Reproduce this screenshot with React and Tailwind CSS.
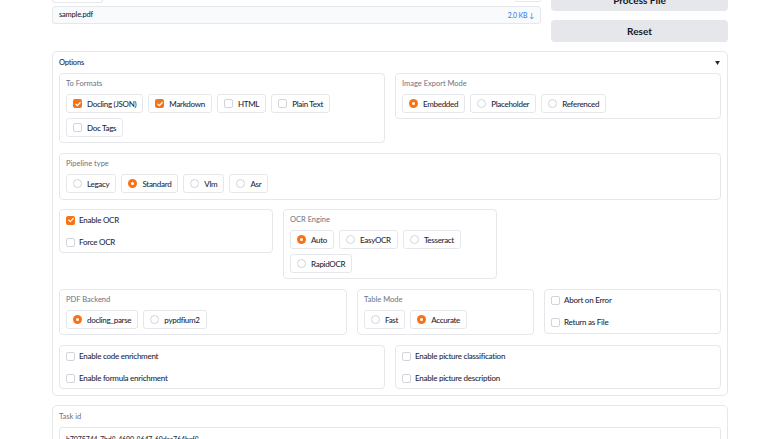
import React from 'react'

const font = { fontFamily: 'Lato, "Open Sans", sans-serif' }

function Tick({ on }) {
  if (!on) return <span className="w-[9px] h-[9px] rounded-[2px] border border-[#d1d5db] bg-white shrink-0" />
  return (
    <span className="w-[9px] h-[9px] rounded-[2px] bg-[#f97316] flex items-center justify-center shrink-0">
      <svg viewBox="0 0 10 10" className="w-[8px] h-[8px]">
        <path d="M2.3 5.3l1.9 1.8 3.6-4" stroke="white" strokeWidth="1.5" fill="none" strokeLinecap="round" strokeLinejoin="round" />
      </svg>
    </span>
  )
}

function Dot({ on }) {
  if (!on) return <span className="w-[9px] h-[9px] rounded-full border border-[#d1d5db] bg-white shrink-0" />
  return (
    <span className="w-[9px] h-[9px] rounded-full bg-[#f97316] flex items-center justify-center shrink-0">
      <span className="w-[3px] h-[3px] rounded-full bg-white" />
    </span>
  )
}

function Chip({ label, on, radio }) {
  return (
    <div className="h-[19px] flex items-center gap-[5px] px-[6px] border border-[#e5e7eb] rounded-[3px] bg-white">
      {radio ? <Dot on={on} /> : <Tick on={on} />}
      <span className="text-[8px] font-medium tracking-[-0.3px] text-[#1f2937] leading-none">{label}</span>
    </div>
  )
}

function Group({ title, children, className = '' }) {
  return (
    <div className={`border border-[#e5e7eb] rounded-[4px] px-[6px] pt-[3px] pb-[5px] ${className}`}>
      <div className="h-[14px] flex items-center text-[7.5px] text-[#6b7280]">{title}</div>
      <div className="mt-[3px] flex flex-wrap gap-[5px]">{children}</div>
    </div>
  )
}

function Toggles({ items, className = '' }) {
  return (
    <div className={`border border-[#e5e7eb] rounded-[4px] px-[6px] pt-[3px] pb-[3px] flex flex-col gap-[8px] ${className}`}>
      {items.map(([label, on]) => (
        <div key={label} className="h-[14px] flex items-center gap-[4px]">
          <Tick on={on} />
          <span className="text-[8px] font-medium tracking-[-0.25px] text-[#1f2937]">{label}</span>
        </div>
      ))}
    </div>
  )
}

export default function App() {
  return (
    <div className="bg-white min-h-screen px-[52px]" style={font}>
      {/* file + actions */}
      <div className="flex items-start gap-[10px]">
        <div className="flex-1">
          <div className="flex justify-between">
            <div className="w-[51px] h-[3px] border border-t-0 border-[#e5e7eb] rounded-b-[3px]" />
            <div className="w-[26px] h-[2px] border border-t-0 border-[#e5e7eb] rounded-b-[3px]" />
          </div>
          <div className="mt-[3px] h-[18px] border border-[#e5e7eb] rounded-[3px] bg-[#f9fafb] flex items-center justify-between px-[6px]">
            <span className="text-[7.5px] font-medium tracking-[-0.2px] text-[#1f2937]">sample.pdf</span>
            <span className="text-[7px] font-medium tracking-[-0.2px] text-[#3b82f6]">2.0 KB ↓</span>
          </div>
        </div>
        <div className="w-[177px] flex flex-col">
          <button className="-mt-[11px] h-[22px] rounded-[4px] bg-[#e5e7eb] text-[10px] font-bold text-[#111827]">Process File</button>
          <button className="mt-[9px] h-[22px] rounded-[4px] bg-[#e5e7eb] text-[10px] font-bold text-[#111827]">Reset</button>
        </div>
      </div>

      {/* options */}
      <div className="mt-[9px] border border-[#e5e7eb] rounded-[5px] px-[6px] pb-[6px]">
        <div className="h-[21px] flex items-center justify-between">
          <span className="text-[7.5px] font-medium tracking-[-0.2px] text-[#1f2937]">Options</span>
          <svg viewBox="0 0 6 5" className="w-[5px] h-[4px] mr-[1px]"><path d="M0 0h6L3 5z" fill="#1f2937" /></svg>
        </div>
        <div className="flex flex-col gap-[10px]">
          <div className="grid grid-cols-2 items-start gap-[10px]">
            <Group title="To Formats">
              <Chip label="Docling (JSON)" on />
              <Chip label="Markdown" on />
              <Chip label="HTML" />
              <Chip label="Plain Text" />
              <Chip label="Doc Tags" />
            </Group>
            <Group title="Image Export Mode">
              <Chip radio label="Embedded" on />
              <Chip radio label="Placeholder" />
              <Chip radio label="Referenced" />
            </Group>
          </div>

          <Group title="Pipeline type" className="pb-[6px]">
            <Chip radio label="Legacy" />
            <Chip radio label="Standard" on />
            <Chip radio label="Vlm" />
            <Chip radio label="Asr" />
          </Group>

          <div className="grid grid-cols-3 items-start gap-[10px] -mt-[1px]">
            <Toggles items={[['Enable OCR', true], ['Force OCR', false]]} />
            <Group title="OCR Engine">
              <Chip radio label="Auto" on />
              <Chip radio label="EasyOCR" />
              <Chip radio label="Tesseract" />
              <Chip radio label="RapidOCR" />
            </Group>
          </div>

          <div className="flex items-start gap-[10px]">
            <Group title="PDF Backend" className="w-[288px]">
              <Chip radio label="docling_parse" on />
              <Chip radio label="pypdfium2" />
            </Group>
            <Group title="Table Mode" className="flex-1">
              <Chip radio label="Fast" />
              <Chip radio label="Accurate" on />
            </Group>
            <Toggles className="flex-1 pb-[4px]" items={[['Abort on Error', false], ['Return as File', false]]} />
          </div>

          <div className="grid grid-cols-2 items-start gap-[10px]">
            <Toggles items={[['Enable code enrichment', false], ['Enable formula enrichment', false]]} />
            <Toggles items={[['Enable picture classification', false], ['Enable picture description', false]]} />
          </div>
        </div>
      </div>

      {/* task id */}
      <div className="mt-[9px] border border-[#e5e7eb] rounded-[5px] px-[6px] pb-[6px]">
        <div className="h-[21px] flex items-center text-[7.5px] text-[#6b7280]">Task id</div>
        <div className="h-[24px] border border-[#e5e7eb] rounded-[3px] px-[6px] flex items-center text-[7px] font-medium tracking-[-0.1px] text-[#1f2937]">
          b7075744-7bd8-4690-8647-60dcc764bef8
        </div>
      </div>
    </div>
  )
}
